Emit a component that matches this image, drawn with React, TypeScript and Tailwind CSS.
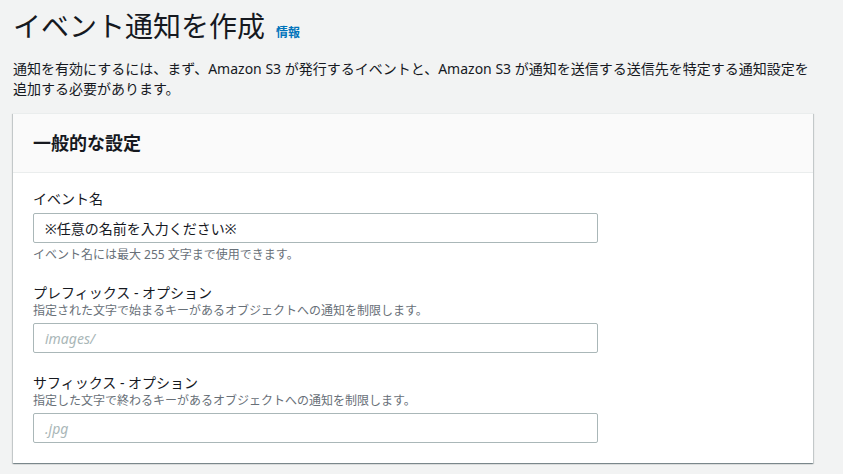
import React from "react";

const font = { fontFamily: '"Noto Sans", "Noto Sans CJK JP", sans-serif' };

function Field({
  label,
  desc,
  value,
  placeholder,
  hint,
}: {
  label: string;
  desc?: string;
  value?: string;
  placeholder?: string;
  hint?: string;
}) {
  return (
    <div className="flex flex-col">
      <div className="text-[14px] leading-[20px] text-[#16191f]">{label}</div>
      {desc && <div className="text-[12px] leading-[16px] text-[#687078]">{desc}</div>}
      <div className="mt-[4px] w-[565px] h-[30px] border border-[#aab7b8] rounded-[2px] bg-white flex items-center px-[11px]">
        {value ? (
          <span className="text-[14px] text-[#16191f]">{value}</span>
        ) : (
          <span className="text-[14px] italic text-[#aab7b8]">{placeholder}</span>
        )}
      </div>
      {hint && <div className="mt-[4px] text-[12px] leading-[16px] text-[#687078]">{hint}</div>}
    </div>
  );
}

export default function App() {
  return (
    <div className="w-[843px] h-[474px] bg-[#f2f3f3] overflow-hidden" style={font}>
      <div className="pl-[13px] pt-[6px]">
        <div className="flex items-baseline gap-[11px]">
          <h1 className="text-[28px] leading-[40px] font-normal text-[#16191f]">イベント通知を作成</h1>
          <a className="text-[12px] font-bold text-[#0073bb]">情報</a>
        </div>
        <p className="mt-[13px] text-[14px] leading-[20px] text-[#16191f]">
          通知を有効にするには、まず、Amazon S3 が発行するイベントと、Amazon S3 が通知を送信する送信先を特定する通知設定を
          <br />
          追加する必要があります。
        </p>
      </div>
      <div className="mt-[14px] ml-[13px] w-[800px] bg-white shadow-[0_1px_1px_0_rgba(0,28,36,0.3),1px_1px_1px_0_rgba(0,28,36,0.15),-1px_1px_1px_0_rgba(0,28,36,0.15)] border-t border-[#eaeded]">
        <div className="h-[59px] bg-[#fafafa] border-b border-[#eaeded] flex items-center px-[20px]">
          <h2 className="text-[18px] font-bold text-[#16191f]">一般的な設定</h2>
        </div>
        <div className="px-[20px] pt-[16px] pb-[20px] flex flex-col gap-[20px]">
          <Field
            label="イベント名"
            value="※任意の名前を入力ください※"
            hint="イベント名には最大 255 文字まで使用できます。"
          />
          <Field
            label="プレフィックス - オプション"
            desc="指定された文字で始まるキーがあるオブジェクトへの通知を制限します。"
            placeholder="images/"
          />
          <Field
            label="サフィックス - オプション"
            desc="指定した文字で終わるキーがあるオブジェクトへの通知を制限します。"
            placeholder=".jpg"
          />
        </div>
      </div>
    </div>
  );
}
